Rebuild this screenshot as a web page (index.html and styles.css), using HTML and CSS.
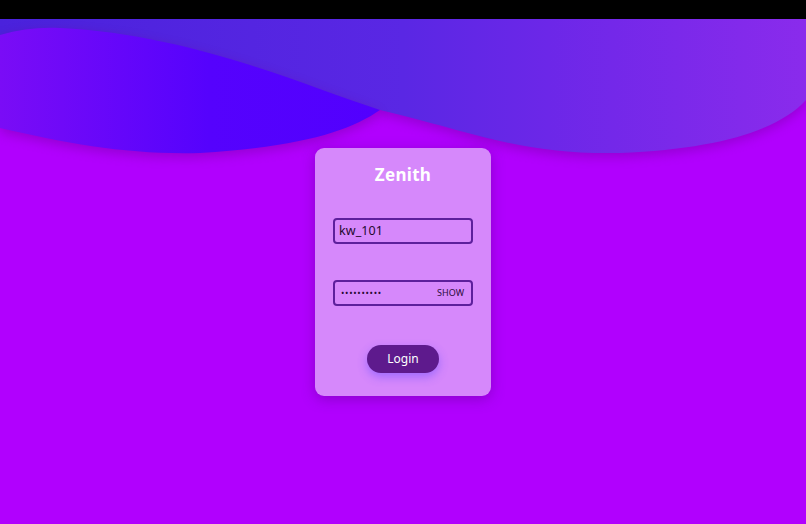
FILE: index.html
```html
<!DOCTYPE html>
<html lang="en">
<head>
<meta charset="utf-8">
<title>Zenith</title>
<link rel="stylesheet" href="styles.css">
</head>
<body>
<div class="topbar"></div>
<main class="stage">
  <svg class="waves" viewBox="0 0 806 150" width="806" height="150" preserveAspectRatio="none" aria-hidden="true">
    <defs>
      <linearGradient id="band" x1="0" y1="0" x2="806" y2="0" gradientUnits="userSpaceOnUse">
        <stop offset="0" stop-color="#4a22dc"/>
        <stop offset="0.5" stop-color="#5a27e4"/>
        <stop offset="0.68" stop-color="#6c27e8"/>
        <stop offset="1" stop-color="#8a2bec"/>
      </linearGradient>
      <linearGradient id="blob" x1="0" y1="0" x2="380" y2="0" gradientUnits="userSpaceOnUse">
        <stop offset="0" stop-color="#7a0cf6"/>
        <stop offset="0.55" stop-color="#5502fd"/>
        <stop offset="1" stop-color="#5200fe"/>
      </linearGradient>
      <filter id="blur" x="-10%" y="-30%" width="120%" height="160%">
        <feGaussianBlur stdDeviation="6"/>
      </filter>
    </defs>
    <path class="shade" filter="url(#blur)" transform="translate(0,4)" d="M0,0 H806 V81 C780,110 720,130 620,134 C520,136 470,112 380,91 C300,72 150,60 0,60 Z"/>
    <path fill="url(#band)" d="M0,0 H806 V81 C780,110 720,130 620,134 C520,136 470,112 380,91 C300,72 150,60 0,60 Z"/>
    <path class="shade" filter="url(#blur)" transform="translate(0,4)" d="M0,16 C20,10 40,8 60,9 C130,12 200,30 250,46 C300,62 340,78 380,91 C350,112 300,128 200,134 C130,136 70,125 0,109 Z"/>
    <path fill="url(#blob)" d="M0,16 C20,10 40,8 60,9 C130,12 200,30 250,46 C300,62 340,78 380,91 C350,112 300,128 200,134 C130,136 70,125 0,109 Z"/>
  </svg>
  <form class="card">
    <h1 class="title">Zenith</h1>
    <div class="field">
      <span class="value">kw_101</span>
    </div>
    <div class="field">
      <span class="dots">••••••••••</span>
      <span class="show">SHOW</span>
    </div>
    <button type="button" class="login">Login</button>
  </form>
</main>
</body>
</html>
```
FILE: styles.css
```css
* { box-sizing: border-box; }
html, body {
  margin: 0;
  padding: 0;
  background: #b100fe;
  font-family: "Noto Sans", "Open Sans", "Liberation Sans", sans-serif;
  overflow: hidden;
}
.topbar {
  height: 19px;
  background: #000;
}
.stage {
  display: grid;
  height: 505px;
  background: #b100fe;
}
.waves {
  grid-area: 1 / 1;
  align-self: start;
  display: block;
  width: 806px;
  height: 150px;
}
.shade {
  fill: #6a0090;
  opacity: 0.4;
}
.card {
  grid-area: 1 / 1;
  place-self: center;
  width: 176px;
  height: 248px;
  margin: 0;
  padding: 17px 18px 0;
  background: #d688fb;
  border-radius: 9px;
  box-shadow: 0 3px 14px rgba(70, 0, 110, 0.35);
  display: flex;
  flex-direction: column;
  align-items: stretch;
}
.title {
  margin: 0;
  height: 20px;
  line-height: 20px;
  text-align: center;
  font-size: 17px;
  font-weight: 700;
  color: #fff;
  letter-spacing: 0.3px;
}
.field {
  height: 26px;
  border: 2px solid #5d1f9c;
  border-radius: 4px;
  display: flex;
  align-items: center;
  justify-content: space-between;
  padding: 0 7px 0 4px;
  margin-top: 33px;
  color: #25082f;
}
.field + .field { margin-top: 36px; }
.value {
  font-size: 12.5px;
  letter-spacing: 0.1px;
}
.dots {
  font-size: 9px;
  letter-spacing: 0.7px;
  padding-left: 2px;
}
.show {
  font-size: 9px;
  letter-spacing: 0;
  color: #2b0a3a;
}
.login {
  align-self: center;
  margin-top: 39px;
  width: 72px;
  height: 28px;
  border: 0;
  border-radius: 14px;
  background: #5e1a8d;
  color: #fff;
  font-family: inherit;
  font-size: 12px;
  box-shadow: 0 4px 10px rgba(90, 70, 255, 0.45);
}
```
